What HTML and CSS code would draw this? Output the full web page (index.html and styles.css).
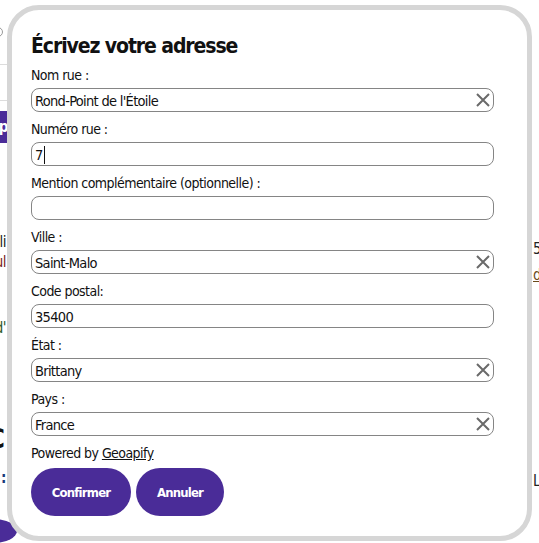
FILE: index.html
```html
<!DOCTYPE html>
<html lang="fr">
<head>
<meta charset="utf-8">
<title>Adresse</title>
<link rel="stylesheet" href="styles.css">
</head>
<body>
<div class="page">
  <div class="side side-left">
    <div class="bg-input"></div>
    <div class="bg-line l1"></div>
    <div class="bg-line l2"></div>
    <div class="bg-btn">ip</div>
    <div class="bg-txt t-i">li</div>
    <div class="bg-txt t-ul">ul</div>
    <div class="bg-txt t-d">d'</div>
    <div class="bg-big">C</div>
    <div class="bg-txt t-colon">:</div>
    <div class="bg-circle"></div>
  </div>
  <div class="side side-right">
    <div class="bg-txt r-5">5</div>
    <div class="bg-txt r-d">d</div>
    <div class="bg-txt r-l">L</div>
  </div>
</div>

<div class="modal">
  <h2 class="title">Écrivez votre adresse</h2>
  <div class="field">
    <label class="label">Nom rue :</label>
    <div class="input has-clear"><span class="val">Rond-Point de l'Étoile</span><svg class="clear" viewBox="0 0 14 14"><path d="M1 1L13 13M13 1L1 13"/></svg></div>
  </div>
  <div class="field">
    <label class="label">Numéro rue :</label>
    <div class="input"><span class="val">7</span><span class="caret"></span></div>
  </div>
  <div class="field">
    <label class="label">Mention complémentaire (optionnelle) :</label>
    <div class="input"></div>
  </div>
  <div class="field">
    <label class="label">Ville :</label>
    <div class="input has-clear"><span class="val">Saint-Malo</span><svg class="clear" viewBox="0 0 14 14"><path d="M1 1L13 13M13 1L1 13"/></svg></div>
  </div>
  <div class="field">
    <label class="label">Code postal:</label>
    <div class="input"><span class="val">35400</span></div>
  </div>
  <div class="field">
    <label class="label">État :</label>
    <div class="input has-clear"><span class="val">Brittany</span><svg class="clear" viewBox="0 0 14 14"><path d="M1 1L13 13M13 1L1 13"/></svg></div>
  </div>
  <div class="field">
    <label class="label">Pays :</label>
    <div class="input has-clear"><span class="val">France</span><svg class="clear" viewBox="0 0 14 14"><path d="M1 1L13 13M13 1L1 13"/></svg></div>
  </div>
  <p class="powered">Powered by <a class="link">Geoapify</a></p>
  <div class="actions">
    <button class="btn btn-confirm">Confirmer</button>
    <button class="btn btn-cancel">Annuler</button>
  </div>
</div>
</body>
</html>
```
FILE: styles.css
```css
* { box-sizing: border-box; }
html, body { margin: 0; padding: 0; background: #fff; }
body {
  width: 539px;
  height: 543px;
  overflow: hidden;
  position: relative;
  font-family: "Liberation Sans Narrow", "DejaVu Sans Condensed", "Liberation Sans", sans-serif;
  font-stretch: condensed;
  color: #111;
}

/* background page fragments */
.page {
  display: flex;
  justify-content: space-between;
  width: 539px;
  height: 543px;
}
.side { display: flex; flex-direction: column; }
.side-left { width: 40px; margin-left: -32px; }
.side-right { width: 20px; margin-right: -14px; }
.bg-input { margin-top: 27px; height: 18px; width: 35px; border: 1px solid #9a9a9a; border-radius: 6px; }
.bg-line { height: 1px; background: #dcdcdc; width: 40px; }
.l1 { margin-top: 27px; }
.l2 { margin-top: 35px; }
.bg-btn {
  margin-top: 11px; height: 32px; width: 40px; background: #4a2c98;
  color: #fff; font-weight: bold; font-size: 15px; line-height: 32px; text-align: right;
  letter-spacing: -0.5px;
}
.bg-txt { font-size: 15px; line-height: 18px; height: 18px; text-align: right; width: 38px; letter-spacing: -0.5px; }
.t-i { margin-top: 90px; color: #222; }
.t-ul { margin-top: 2px; color: #7a1f1f; }
.t-d { margin-top: 48px; color: #2f5a2a; }
.bg-big { margin-top: 88px; font-size: 26px; font-weight: bold; line-height: 28px; height: 28px; width: 37px; text-align: right; }
.t-colon { margin-top: 16px; color: #1a3a7a; font-weight: bold; }
.bg-circle { margin-top: 32px; width: 48px; height: 48px; border-radius: 50%; background: #4a2c98; margin-left: 1px; }
.side-right .bg-txt { text-align: left; width: 20px; }
.r-5 { margin-top: 240px; color: #222; }
.r-d { margin-top: 8px; color: #6b4a1a; text-decoration: underline; }
.r-l { margin-top: 188px; color: #222; }

/* modal */
.modal {
  position: absolute;
  left: 7px;
  top: 5px;
  width: 525px;
  height: 536px;
  background: #fff;
  border: 5px solid #d6d6d6;
  border-radius: 32px;
  padding: 20px 33px 20px 19px;
  display: flex;
  flex-direction: column;
}
.title {
  margin: 0 0 6px;
  font-size: 21px;
  line-height: 28px;
  font-weight: bold;
  letter-spacing: -1.1px;
  color: #111;
  padding-top: 2px;
  height: 28px;
}
.field { display: flex; flex-direction: column; gap: 4px; margin-bottom: 6px; }
.label { font-size: 14px; line-height: 20px; height: 20px; letter-spacing: -0.55px; color: #111; padding-top: 1px; }
.input {
  position: relative;
  height: 24px;
  border: 1px solid #858585;
  border-radius: 8px;
  padding: 1px 3px 0;
  font-size: 14.5px;
  letter-spacing: -0.7px;
  line-height: 22px;
  display: flex;
  align-items: center;
  color: #111;
}
.val { white-space: nowrap; }
.caret { width: 1px; height: 18px; background: #111; margin-left: 1px; }
.clear {
  position: absolute;
  right: 3px;
  top: 4px;
  width: 14px;
  height: 14px;
  fill: none;
  stroke: #6a6a6a;
  stroke-width: 2;
}
.powered { margin: 0 0 6px; font-size: 14px; letter-spacing: -0.55px; line-height: 20px; height: 20px; padding-top: 1px; color: #111; }
.link { color: #111; text-decoration: underline; }
.actions { display: flex; gap: 5px; }
.btn {
  height: 48px;
  border: 0;
  border-radius: 24px;
  background: #4a2c98;
  color: #fff;
  font-family: inherit;
  font-stretch: condensed;
  font-weight: bold;
  font-size: 13px;
  letter-spacing: -0.8px;
  padding: 0;
}
.btn-confirm { width: 100px; }
.btn-cancel { width: 88px; }
```
